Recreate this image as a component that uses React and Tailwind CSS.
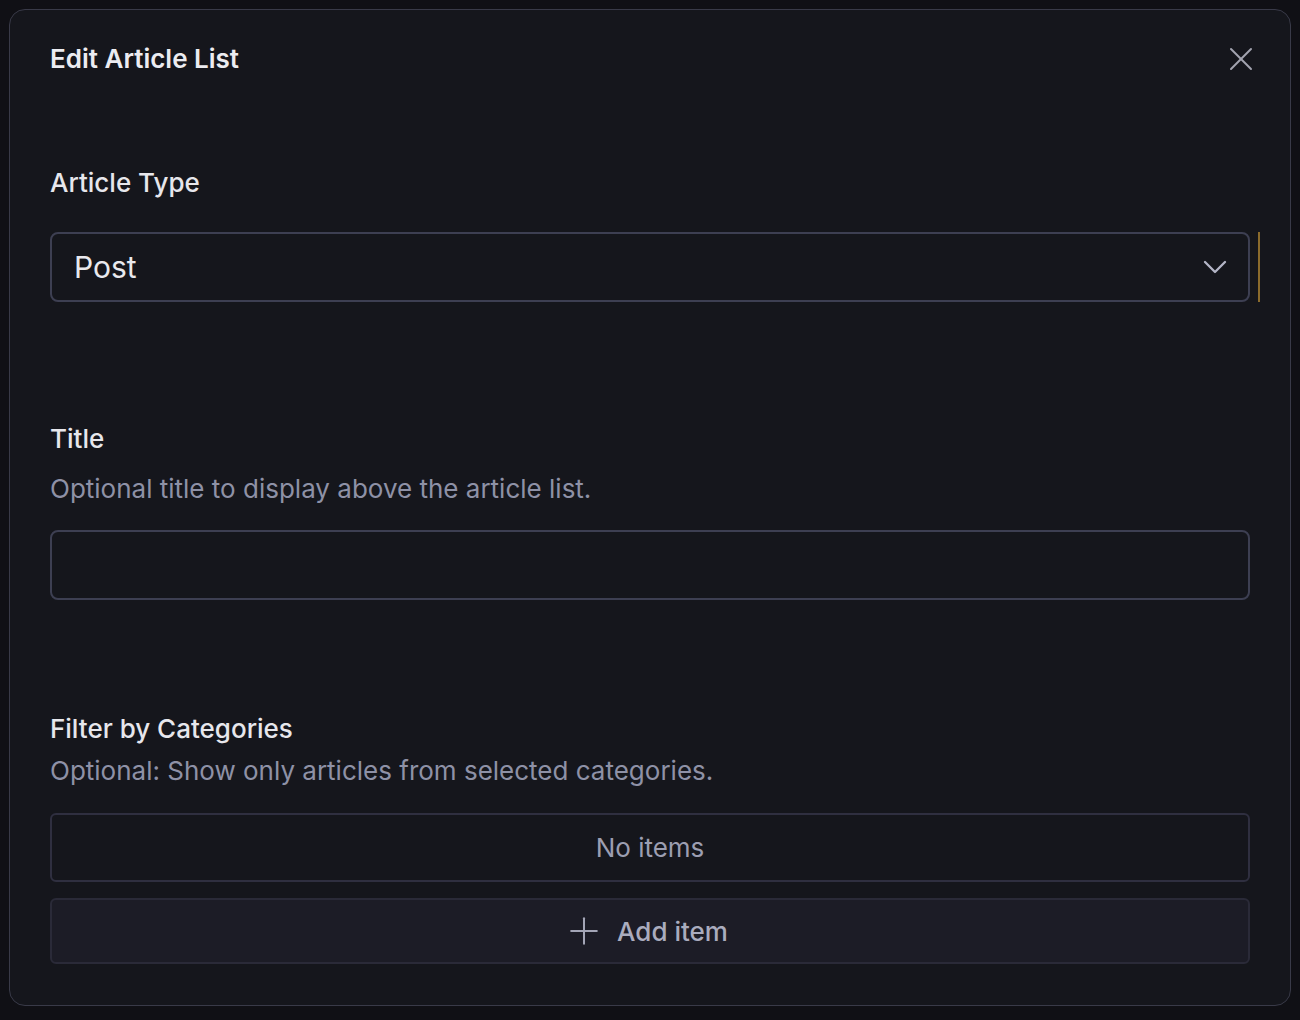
import { X, ChevronDown, Plus } from "lucide-react";

function Field({ label, hint, children, className = "" }) {
  return (
    <div className={className}>
      <div className="text-[26px] leading-[32px] font-medium text-[#e7e7ec]">{label}</div>
      {hint && (
        <p className="mt-[18px] text-[26px] leading-[32px] text-[#8e91a6]">{hint}</p>
      )}
      {children}
    </div>
  );
}

export default function App() {
  return (
    <div
      className="h-[1020px] bg-[#101015] p-[9px] pb-[14px]"
      style={{ fontFamily: "Inter, 'Noto Sans', sans-serif" }}
    >
      <div className="rounded-[16px] border border-[#393a48] bg-[#15161c] px-[40px] pt-[33px] pb-[41px]">
        <div className="flex h-[32px] items-center justify-between">
          <h2 className="text-[26px] leading-[32px] font-semibold text-[#ececf1]">Edit Article List</h2>
          <button className="-my-[4px] mr-[-11px] text-[#a3a4b0]">
            <X className="h-[40px] w-[40px]" strokeWidth={1.2} />
          </button>
        </div>

        <Field label="Article Type" className="mt-[92px]">
          <div className="relative mt-[33px]">
            <div className="flex h-[70px] items-center justify-between rounded-[8px] border-2 border-[#3d3f52] pl-[22px] pr-[13px]">
              <span className="text-[30px] text-[#e9e9ee]">Post</span>
              <ChevronDown className="h-[40px] w-[40px] text-[#b3b5c6]" strokeWidth={1.4} />
            </div>
            <div className="absolute top-0 right-[-10px] h-[70px] w-[2px] bg-[#8b6b2c]" />
          </div>
        </Field>

        <Field
          label="Title"
          hint="Optional title to display above the article list."
          className="mt-[121px]"
        >
          <div className="mt-[25px] h-[70px] rounded-[8px] border-2 border-[#3d3f52]" />
        </Field>

        <div className="mt-[113px]">
          <div className="text-[26px] leading-[32px] font-medium text-[#e7e7ec]">Filter by Categories</div>
          <p className="mt-[10px] text-[26px] leading-[32px] text-[#8e91a6]">
            Optional: Show only articles from selected categories.
          </p>
          <div className="mt-[26px] flex h-[69px] items-center justify-center rounded-[6px] border-2 border-[#2f2f40] text-[26px] text-[#9c9eb1]">
            No items
          </div>
          <button className="mt-[16px] flex h-[66px] w-full items-center justify-center gap-[11px] rounded-[6px] border-2 border-[#2a2a38] bg-[#1c1c26] pr-[10px] text-[26px] text-[#aaacbe]">
            <Plus className="h-[44px] w-[44px] text-[#a3a5b6]" strokeWidth={1.1} />
            <span className="font-medium">Add item</span>
          </button>
        </div>
      </div>
    </div>
  );
}
